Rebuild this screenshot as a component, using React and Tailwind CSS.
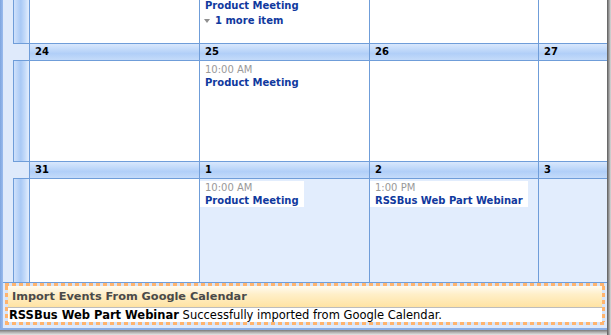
const font = { fontFamily: '"DejaVu Sans", Verdana, sans-serif' };

const weeks = [
  {
    header: null,
    height: "h-[43px]",
    cells: [
      { muted: false },
      { muted: false, top: true },
      { muted: false },
      { muted: false },
    ],
  },
  {
    header: ["24", "25", "26", "27"],
    height: "h-[100px]",
    cells: [
      { muted: false },
      { muted: false, event: { time: "10:00 AM", title: "Product Meeting" } },
      { muted: false },
      { muted: false },
    ],
  },
  {
    header: ["31", "1", "2", "3"],
    height: "h-[103px]",
    cells: [
      { muted: false },
      { muted: true, event: { time: "10:00 AM", title: "Product Meeting" } },
      { muted: true, event: { time: "1:00 PM", title: "RSSBus Web Part Webinar" } },
      { muted: true },
    ],
  },
];

const widths = ["w-[170px]", "w-[170px]", "w-[169px]", "flex-1"];

function Event({ time, title }) {
  return (
    <div className="mt-[2px] self-start bg-white pl-[5px] pr-[5px]">
      <div className="h-[13px] text-[10px] leading-[13px] text-[#999999]">{time}</div>
      <div className="h-[13px] text-[10px] font-bold leading-[13px] text-[#10399e]">{title}</div>
    </div>
  );
}

function Week({ week }) {
  return (
    <div className="flex flex-col">
      {week.header && (
        <div className="flex h-[18px] border-y border-[#6f9dd9]">
          <div className="w-[16px]" />
          {week.header.map((d, i) => (
            <div
              key={i}
              className={`${widths[i]} border-l border-[#6f9dd9] bg-[linear-gradient(to_bottom,#d9e8fd,#b1cff8_60%,#c4dbfa)] pl-[5px] text-[10px] font-bold leading-[16px] text-black`}
            >
              {d}
            </div>
          ))}
        </div>
      )}
      <div className={`flex ${week.height}`}>
        <div className="w-[16px] border-l border-[#6f9dd9] bg-[linear-gradient(to_right,#cfe1fb,#a9c9f5_45%,#c6dcfa_75%,#e4eefd)]" />
        {week.cells.map((c, i) => (
          <div
            key={i}
            className={`${widths[i]} flex flex-col border-l border-[#6f9dd9] ${c.muted ? "bg-[#e2edfd]" : "bg-white"}`}
          >
            {c.event && <Event {...c.event} />}
            {c.top && (
              <div className="mt-[-1px] pl-[5px]">
                <div className="h-[13px] text-[10px] font-bold leading-[13px] text-[#10399e]">Product Meeting</div>
                <div className="mt-[2px] flex h-[13px] items-center text-[10px] font-bold leading-[13px] text-[#10399e]">
                  <svg width="6" height="4" viewBox="0 0 6 4" className="ml-[-1px] mr-[5px]">
                    <polygon points="0,0 6,0 3,4" fill="#8f8f8f" />
                  </svg>
                  1 more item
                </div>
              </div>
            )}
          </div>
        ))}
      </div>
    </div>
  );
}

function Dashes({ vertical }) {
  return vertical ? (
    <div className="w-[3px] bg-[repeating-linear-gradient(to_bottom,#ffb46e_0px,#ffb46e_4px,#d6e5f9_4px,#d6e5f9_7px)]" />
  ) : (
    <div className="h-[3px] bg-[repeating-linear-gradient(to_right,#ffb46e_0px,#ffb46e_4px,#d6e5f9_4px,#d6e5f9_7px)]" />
  );
}

export default function App() {
  return (
    <div className="flex h-[335px] w-[611px] overflow-hidden bg-white" style={font}>
      <div className="flex w-[607px] flex-col">
        <div className="flex flex-1">
          <div className="w-[3px] bg-[linear-gradient(to_right,#7ea5df,#9bbcee)]" />
          <div className="flex flex-1 flex-col bg-[#dfeafb]">
            <div className="flex flex-col border-b border-[#6f9dd9] pl-[10px]">
              {weeks.map((w, i) => (
                <Week key={i} week={w} />
              ))}
            </div>
            <div className="mx-[2px] flex flex-col">
              <Dashes />
              <div className="flex">
                <Dashes vertical />
                <div className="flex flex-1 flex-col">
                  <div className="h-[21px] bg-[linear-gradient(to_bottom,#fffbf1,#ffefc8_40%,#ffe3a3)] pl-[4px] text-[11.3px] font-bold leading-[21px] text-[#4a4a4a]">
                    Import Events From Google Calendar
                  </div>
                  <div className="h-px bg-[#bdbdbd]" />
                  <div className="h-[14px] bg-white pl-[1px] text-[11.5px] leading-[14px] text-black">
                    <span className="font-bold">RSSBus Web Part Webinar</span> Successfully imported from Google Calendar.
                  </div>
                </div>
                <Dashes vertical />
              </div>
              <Dashes />
            </div>
            <div className="h-[3px]" />
          </div>
        </div>
        <div className="h-[2px] bg-[#89aee6]" />
        <div className="h-[5px] bg-[linear-gradient(to_bottom,#7a7a7a,#b5b5b5_50%,#e6e6e6)]" />
      </div>
      <div className="w-[4px] bg-[linear-gradient(to_right,#5a5a5a,#9a9a9a_50%,#dcdcdc)]" />
    </div>
  );
}
